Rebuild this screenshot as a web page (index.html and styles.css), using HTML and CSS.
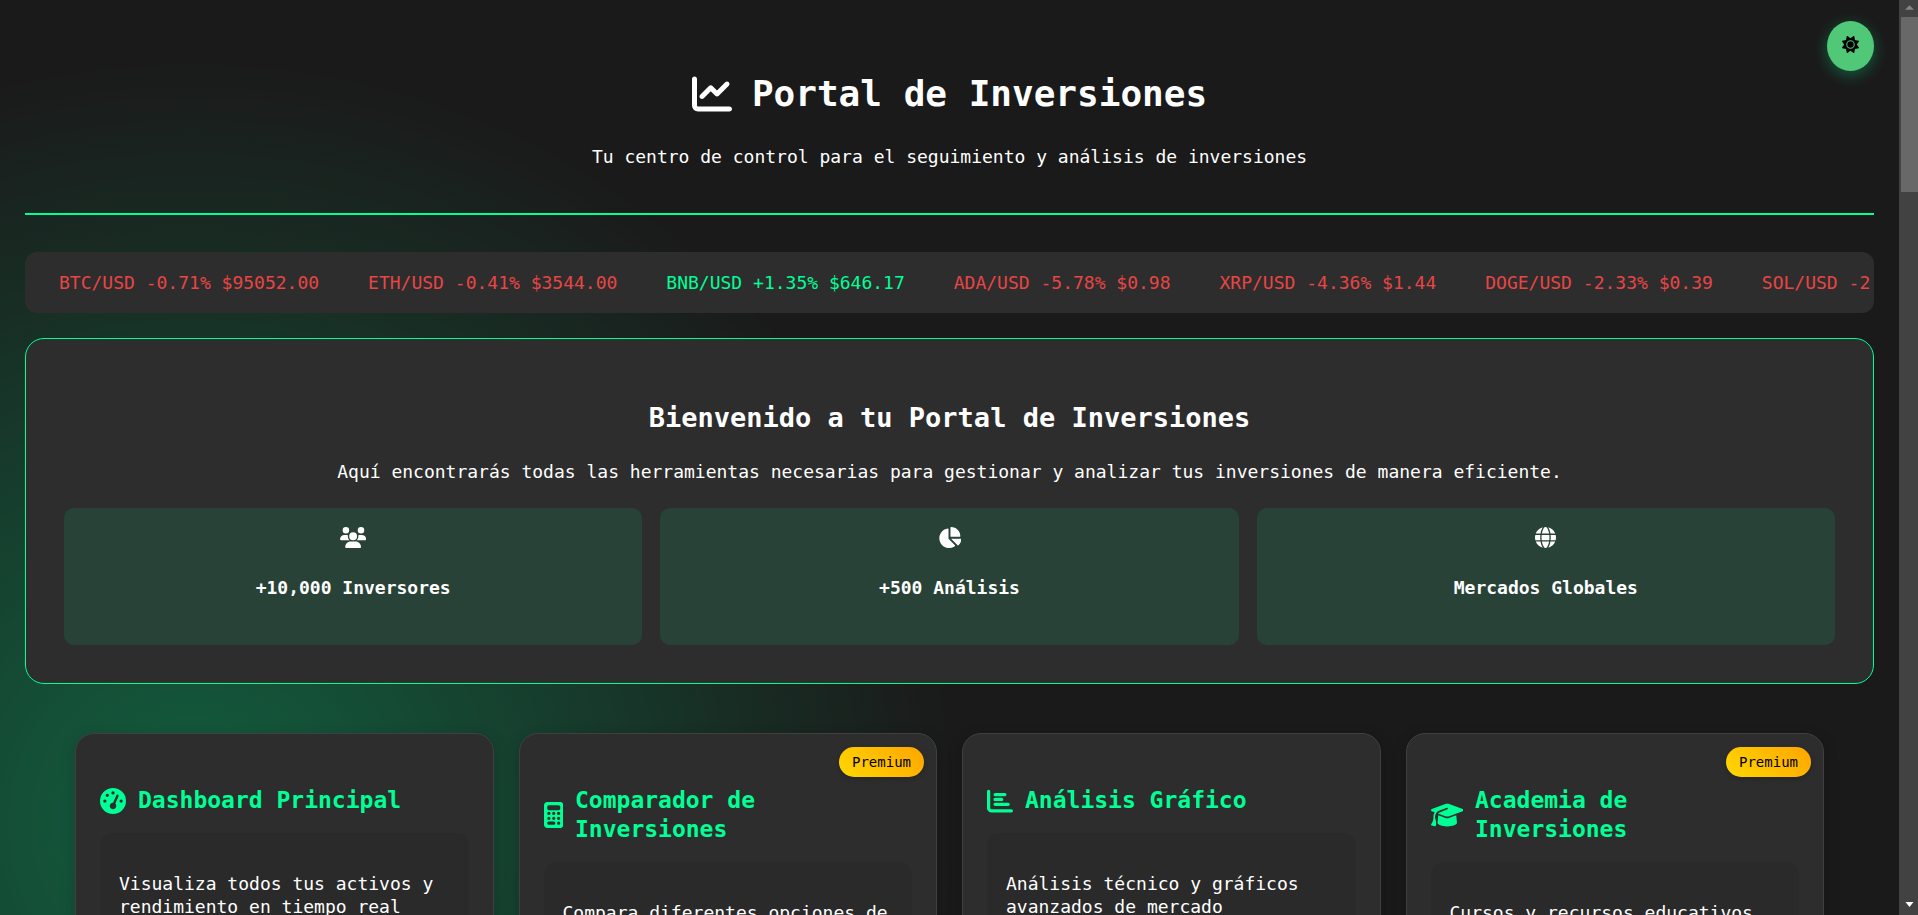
FILE: index.html
```html
<!DOCTYPE html>
<html lang="es">
<head>
<meta charset="utf-8">
<meta name="viewport" content="width=device-width, initial-scale=1">
<title>Portal de Inversiones</title>
<link rel="stylesheet" href="styles.css">
</head>
<body>
<button class="theme-toggle" type="button" aria-label="Cambiar tema">
  <svg class="icon" viewBox="0 0 512 512"><path d="M361.5 1.2c5 2.1 8.6 6.6 9.6 11.9L391 121l107.9 19.8c5.3 1 9.8 4.6 11.9 9.6s1.5 10.7-1.6 15.2L446.9 256l62.3 90.3c3.1 4.5 3.7 10.2 1.6 15.2s-6.6 8.6-11.9 9.6L391 391 371.1 498.9c-1 5.3-4.6 9.8-9.6 11.9s-10.7 1.5-15.2-1.6L256 446.9l-90.3 62.3c-4.5 3.1-10.2 3.7-15.2 1.6s-8.6-6.6-9.6-11.9L121 391 13.1 371.1c-5.3-1-9.8-4.6-11.9-9.6s-1.5-10.7 1.6-15.2L65.1 256 2.8 165.7c-3.1-4.5-3.7-10.2-1.6-15.2s6.6-8.6 11.900-9.6L121 121 140.900 13.100c1-5.300 4.600-9.800 9.600-11.900s10.700-1.500 15.200 1.600L256 65.100 346.300 2.800c4.500-3.100 10.200-3.700 15.200-1.600zM160 256a96 96 0 1 1 192 0 96 96 0 1 1 -192 0zm224 0a128 128 0 1 0 -256 0 128 128 0 1 0 256 0z"/></svg>
</button>

<header class="header">
  <h1 class="title">
    <svg class="icon" viewBox="0 0 512 512"><path d="M64 64c0-17.700-14.300-32-32-32S0 46.300 0 64V400c0 44.200 35.800 80 80 80H480c17.700 0 32-14.300 32-32s-14.300-32-32-32H80c-8.800 0-16-7.200-16-16V64zm406.600 86.600c12.500-12.500 12.500-32.800 0-45.300s-32.800-12.500-45.300 0L320 210.700l-57.400-57.400c-12.500-12.500-32.800-12.500-45.300 0l-112 112c-12.500 12.500-12.500 32.800 0 45.300s32.800 12.500 45.300 0L240 221.300l57.400 57.400c12.500 12.500 32.800 12.500 45.300 0l128-128z"/></svg>
    Portal de Inversiones
  </h1>
  <p class="subtitle">Tu centro de control para el seguimiento y análisis de inversiones</p>
</header>

<div class="ticker">
  <span class="down">BTC/USD -0.71% $95052.00</span>
  <span class="down">ETH/USD -0.41% $3544.00</span>
  <span class="up">BNB/USD +1.35% $646.17</span>
  <span class="down">ADA/USD -5.78% $0.98</span>
  <span class="down">XRP/USD -4.36% $1.44</span>
  <span class="down">DOGE/USD -2.33% $0.39</span>
  <span class="down">SOL/USD -2.10% $238.40</span>
</div>

<main>
  <section class="welcome">
    <h2 class="welcome-title">Bienvenido a tu Portal de Inversiones</h2>
    <p class="welcome-text">Aquí encontrarás todas las herramientas necesarias para gestionar y analizar tus inversiones de manera eficiente.</p>
    <div class="stats">
      <div class="stat">
        <svg class="icon" viewBox="0 0 640 512"><path d="M144 0a80 80 0 1 1 0 160A80 80 0 1 1 144 0zM512 0a80 80 0 1 1 0 160A80 80 0 1 1 512 0zM0 298.700C0 239.800 47.800 192 106.700 192h42.700c15.900 0 31 3.500 44.600 9.700c-1.300 7.200-1.900 14.700-1.900 22.300c0 38.200 16.800 72.500 43.300 96c-.2 0-.4 0-.7 0H21.300C9.600 320 0 310.400 0 298.700zM405.300 320c-.2 0-.4 0-.7 0c26.600-23.500 43.300-57.800 43.300-96c0-7.600-.7-15-1.900-22.300c13.600-6.300 28.700-9.700 44.600-9.700h42.700C592.200 192 640 239.800 640 298.700c0 11.800-9.600 21.300-21.300 21.300H405.300zM224 224a96 96 0 1 1 192 0 96 96 0 1 1 -192 0zM128 485.300C128 411.700 187.700 352 261.300 352H378.700C452.300 352 512 411.700 512 485.300c0 14.700-11.900 26.700-26.700 26.700H154.700c-14.700 0-26.700-11.900-26.700-26.700z"/></svg>
        <h3>+10,000 Inversores</h3>
      </div>
      <div class="stat">
        <svg class="icon" viewBox="0 0 576 512"><path d="M304 240V16.600c0-9 7-16.600 16-16.600C443.700 0 544 100.300 544 224c0 9-7.600 16-16.600 16H304zM32 272C32 150.700 122.100 50.300 239 34.300c9.200-1.300 17 6.100 17 15.400V288L412.500 444.500c6.700 6.700 6.200 17.700-1.500 23.100C371.800 495.600 323.800 512 272 512C139.500 512 32 404.600 32 272zm526.400 16c9.300 0 16.600 7.800 15.400 17c-7.700 55.900-34.600 105.600-73.900 142.300c-6 5.600-15.400 5.200-21.200-.7L320 288H558.400z"/></svg>
        <h3>+500 Análisis</h3>
      </div>
      <div class="stat">
        <svg class="icon" viewBox="0 0 512 512"><path d="M352 256c0 22.200-1.200 43.600-3.300 64H163.300c-2.200-20.400-3.300-41.800-3.300-64s1.200-43.600 3.300-64H348.700c2.200 20.400 3.300 41.800 3.300 64zm28.800-64H503.900c5.300 20.500 8.100 41.900 8.100 64s-2.800 43.500-8.100 64H380.800c2.100-20.600 3.200-42 3.200-64s-1.100-43.400-3.200-64zm112.600-32H376.700c-10-63.900-29.800-117.400-55.300-151.600c78.300 20.700 142 77.500 171.900 151.600zm-149.100 0H167.700c6.100-36.400 15.500-68.600 27-94.700c10.500-23.600 22.200-40.700 33.500-51.500C239.400 3.200 248.700 0 256 0s16.600 3.200 27.800 13.800c11.300 10.800 23 27.900 33.500 51.500c11.600 26 20.900 58.200 27 94.700zm-209 0H18.600C48.600 85.900 112.200 29.100 190.600 8.400C165.100 42.600 145.300 96.100 135.300 160zM8.100 192H131.200c-2.100 20.600-3.200 42-3.200 64s1.100 43.400 3.200 64H8.100C2.800 299.500 0 278.100 0 256s2.800-43.500 8.100-64zM194.700 446.600c-11.600-26-20.900-58.200-27-94.600H344.300c-6.100 36.400-15.500 68.600-27 94.600c-10.500 23.600-22.200 40.700-33.500 51.500C272.600 508.800 263.300 512 256 512s-16.600-3.200-27.800-13.800c-11.300-10.800-23-27.900-33.500-51.500zM135.300 352c10 63.900 29.800 117.400 55.300 151.600C112.200 482.900 48.600 426.100 18.600 352H135.300zm358.100 0c-30 74.100-93.600 130.900-171.900 151.600c25.500-34.200 45.200-87.700 55.300-151.600H493.400z"/></svg>
        <h3>Mercados Globales</h3>
      </div>
    </div>
  </section>

  <section class="cards">
    <article class="card">
      <h2 class="card-title">
        <svg class="icon" viewBox="0 0 512 512"><path d="M0 256a256 256 0 1 1 512 0A256 256 0 1 1 0 256zM288 96a32 32 0 1 0 -64 0 32 32 0 1 0 64 0zM256 416c35.300 0 64-28.700 64-64c0-17.400-6.900-33.100-18.100-44.600L366 161.700c5.300-12.100-.2-26.300-12.300-31.600s-26.300 .2-31.600 12.300L257.900 288c-.6 0-1.300 0-1.900 0c-35.300 0-64 28.700-64 64s28.700 64 64 64zM176 144a32 32 0 1 0 -64 0 32 32 0 1 0 64 0zM96 288a32 32 0 1 0 0-64 32 32 0 1 0 0 64zm352-32a32 32 0 1 0 -64 0 32 32 0 1 0 64 0z"/></svg>
        <span>Dashboard Principal</span>
      </h2>
      <div class="card-body"><p>Visualiza todos tus activos y rendimiento en tiempo real</p></div>
    </article>
    <article class="card">
      <span class="badge">Premium</span>
      <h2 class="card-title">
        <svg class="icon" viewBox="0 0 384 512"><path d="M64 0C28.700 0 0 28.700 0 64V448c0 35.300 28.700 64 64 64H320c35.300 0 64-28.700 64-64V64c0-35.300-28.700-64-64-64H64zM96 64H288c17.700 0 32 14.300 32 32v32c0 17.700-14.300 32-32 32H96c-17.700 0-32-14.300-32-32V96c0-17.700 14.300-32 32-32zm32 160a32 32 0 1 1 -64 0 32 32 0 1 1 64 0zM96 352a32 32 0 1 1 0-64 32 32 0 1 1 0 64zM64 416c0-17.700 14.300-32 32-32h96c17.700 0 32 14.300 32 32s-14.300 32-32 32H96c-17.700 0-32-14.300-32-32zM192 256a32 32 0 1 1 0-64 32 32 0 1 1 0 64zm32 64a32 32 0 1 1 -64 0 32 32 0 1 1 64 0zm64-64a32 32 0 1 1 0-64 32 32 0 1 1 0 64zm32 64a32 32 0 1 1 -64 0 32 32 0 1 1 64 0zM288 448a32 32 0 1 1 0-64 32 32 0 1 1 0 64z" fill-rule="evenodd"/></svg>
        <span>Comparador de Inversiones</span>
      </h2>
      <div class="card-body"><p>Compara diferentes opciones de inversión</p></div>
    </article>
    <article class="card">
      <h2 class="card-title">
        <svg class="icon" viewBox="0 0 512 512"><path d="M32 32c17.700 0 32 14.300 32 32V400c0 8.800 7.200 16 16 16H480c17.700 0 32 14.300 32 32s-14.300 32-32 32H80c-44.200 0-80-35.800-80-80V64C0 46.300 14.300 32 32 32zm96 96c0-17.700 14.300-32 32-32l192 0c17.700 0 32 14.300 32 32s-14.300 32-32 32l-192 0c-17.700 0-32-14.300-32-32zm32 64H288c17.700 0 32 14.300 32 32s-14.300 32-32 32H160c-17.700 0-32-14.300-32-32s14.300-32 32-32zm0 96H416c17.700 0 32 14.300 32 32s-14.300 32-32 32H160c-17.700 0-32-14.300-32-32s14.300-32 32-32z"/></svg>
        <span>Análisis Gráfico</span>
      </h2>
      <div class="card-body"><p>Análisis técnico y gráficos avanzados de mercado</p></div>
    </article>
    <article class="card">
      <span class="badge">Premium</span>
      <h2 class="card-title">
        <svg class="icon" viewBox="0 0 640 512"><path d="M320 32c-8.100 0-16.100 1.400-23.700 4.100L15.800 137.400C6.300 140.900 0 149.900 0 160s6.300 19.100 15.800 22.600l57.900 20.900C57.300 229.300 48 259.800 48 291.900v28.100c0 28.400-10.800 57.700-22.300 80.800c-6.500 13-13.900 25.800-22.500 37.600C0 442.700-.9 448.300 .9 453.400s6 8.900 11.200 10.200l64 16c4.200 1.100 8.700 .3 12.400-2s6.300-6.100 7.100-10.400c8.600-42.800 4.300-81.200-2.100-108.700C90.300 344.300 86 329.800 80 316.500V291.900c0-30.200 10.200-58.700 27.900-81.500c12.900-15.500 29.600-28 49.200-35.700l157-61.700c8.200-3.200 17.500 .8 20.700 9s-.8 17.500-9 20.700l-157 61.700c-12.400 4.900-23.300 12.400-32.200 21.600l159.600 57.600c7.600 2.700 15.600 4.100 23.700 4.100s16.100-1.400 23.700-4.100L624.200 182.600c9.500-3.400 15.800-12.500 15.800-22.600s-6.300-19.100-15.800-22.600L343.700 36.100C336.100 33.400 328.100 32 320 32zM128 408c0 35.300 86 72 192 72s192-36.700 192-72L496.700 262.600 354.500 314c-11.100 4-22.800 6-34.500 6s-23.500-2-34.500-6L143.300 262.600 128 408z"/></svg>
        <span>Academia de Inversiones</span>
      </h2>
      <div class="card-body"><p>Cursos y recursos educativos</p></div>
    </article>
  </section>
</main>

<div class="scrollbar" aria-hidden="true">
  <svg class="arrow arrow-up" viewBox="0 0 10 5"><path d="M0 5 5 0l5 5z"/></svg>
  <div class="thumb"></div>
  <svg class="arrow arrow-down" viewBox="0 0 8 5"><path d="M0 0h8L4 5z"/></svg>
</div>
</body>
</html>
```
FILE: styles.css
```css
:root {
  --green: #00ff95;
  --base: #1a1a1a;
  --panel: #2d2d2d;
  --bar: 19px;
  scrollbar-width: none;
}

* {
  box-sizing: border-box;
}

body {
  margin: 0;
  padding: 25px;
  padding-right: calc(25px + var(--bar));
  min-height: 100vh;
  color: #fff;
  font: 18px/23px "DejaVu Sans Mono", "Liberation Mono", monospace;
  background: radial-gradient(circle at 10% 90%, rgba(0, 255, 149, 0.3), transparent 40%) 0 0 / 100vw 100vh fixed var(--base);
}

h1, h2, h3, p {
  margin: 0;
}

.icon {
  height: 1em;
  fill: currentColor;
  flex: none;
}

.theme-toggle {
  position: fixed;
  top: 21px;
  right: calc(25px + var(--bar));
  display: flex;
  align-items: center;
  justify-content: center;
  width: 47px;
  height: 50px;
  padding: 0 0 4px;
  border: 0;
  border-radius: 50%;
  background: #50c878;
  color: #000;
  font-size: 17px;
  box-shadow: 0 4px 15px rgba(0, 255, 149, 0.3);
  z-index: 2;
}

.header {
  padding: 46px 0 45px;
  border-bottom: 2px solid var(--green);
  text-align: center;
}

.title {
  display: flex;
  align-items: center;
  justify-content: center;
  gap: 20px;
  font-size: 36px;
  line-height: 46px;
}

.title .icon {
  height: 40px;
}

.subtitle {
  margin-top: 28px;
}

.ticker {
  display: flex;
  gap: 49px;
  margin: 37px 0 25px;
  padding: 19px 34px;
  border-radius: 12px;
  background: var(--panel);
  white-space: nowrap;
  overflow: hidden;
}

.down {
  color: #e84545;
}

.up {
  color: var(--green);
}

.welcome {
  padding: 60px 38px 38px;
  border: 1px solid var(--green);
  border-radius: 19px;
  background: var(--panel);
  text-align: center;
}

.welcome-title {
  font-size: 27px;
  line-height: 38px;
}

.welcome-text {
  margin: 23px 0 25px;
}

.stats {
  display: grid;
  grid-template-columns: repeat(3, 1fr);
  gap: 18px;
}

.stat {
  display: flex;
  flex-direction: column;
  align-items: center;
  gap: 28px;
  padding: 19px 19px 46px;
  border-radius: 10px;
  background: rgba(0, 255, 149, 0.1);
}

.stat .icon {
  height: 21px;
}

.stat h3 {
  font-size: 18px;
}

.cards {
  display: grid;
  grid-template-columns: repeat(4, 1fr);
  gap: 25px;
  padding: 49px 50px 25px;
}

.card {
  position: relative;
  padding: 52px 24px 24px;
  border: 1px solid #404040;
  border-radius: 19px;
  background: var(--panel);
  box-shadow: 0 4px 15px rgba(0, 0, 0, 0.2);
}

.card-title {
  display: flex;
  align-items: center;
  gap: 12px;
  padding-right: 12px;
  color: var(--green);
  font-size: 23px;
  line-height: 29px;
}

.card-title .icon {
  height: 26px;
}

.card-body {
  margin-top: 18px;
  padding: 39px 19px;
  border-radius: 12px;
  background: rgba(0, 0, 0, 0.05);
}

.badge {
  position: absolute;
  top: 13px;
  right: 12px;
  padding: 0 13px;
  border-radius: 15px;
  background: linear-gradient(45deg, #ffd700, #ffa500);
  color: #000;
  font-size: 14px;
  line-height: 30px;
  box-shadow: 0 2px 5px rgba(0, 0, 0, 0.2);
}

.scrollbar {
  position: fixed;
  top: 0;
  right: 0;
  bottom: 0;
  display: flex;
  flex-direction: column;
  align-items: center;
  width: var(--bar);
  padding: 5px 0 8px 2px;
  background: #424242;
  z-index: 3;
}

.thumb {
  width: 100%;
  height: 175px;
  margin-top: 7px;
  background: #686868;
}

.arrow {
  width: 9px;
  height: 5px;
}

.arrow-up {
  fill: #858585;
}

.arrow-down {
  margin-top: auto;
  fill: #fff;
}
```
